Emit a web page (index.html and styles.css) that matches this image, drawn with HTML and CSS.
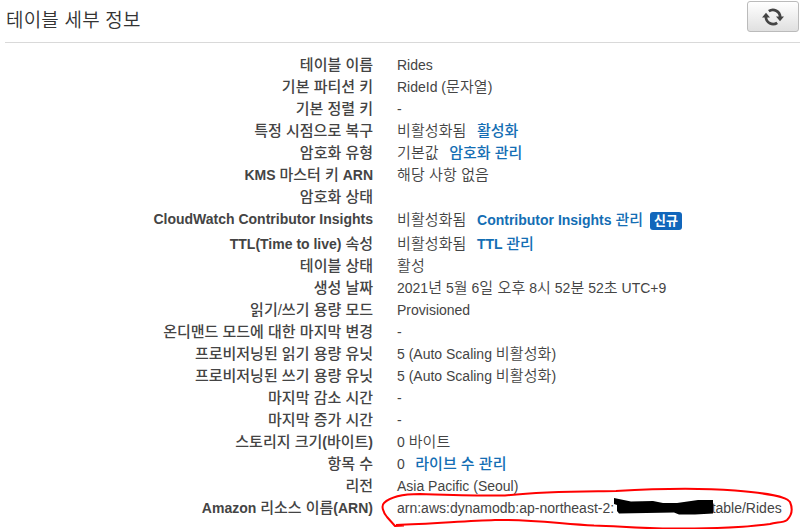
FILE: index.html
```html
<!DOCTYPE html>
<html lang="ko">
<head>
<meta charset="utf-8">
<title>테이블 세부 정보</title>
<link rel="stylesheet" href="styles.css">
</head>
<body>
<header class="header">
  <h1 class="title">테이블 세부 정보</h1>
  <button class="refresh" type="button" aria-label="새로 고침">
    <svg width="22" height="20" viewBox="0 0 22 20">
      <g fill="none" stroke="#444" stroke-width="2.7">
        <path d="M6.800 4.200A7.200 7.200 0 0 1 18.100 10"/>
        <path d="M15.200 15.800A7.200 7.200 0 0 1 3.900 10"/>
      </g>
      <path d="M14 9.500H22L18 14.200Z M0 10.500H8L4 5.800Z" fill="#444"/>
    </svg>
  </button>
</header>
<dl class="details">
  <dt><span class="ko">테이블 이름</span></dt><dd>Rides</dd>
  <dt><span class="ko">기본 파티션 키</span></dt><dd>RideId (<span class="ko">문자열</span>)</dd>
  <dt><span class="ko">기본 정렬 키</span></dt><dd>-</dd>
  <dt><span class="ko">특정 시점으로 복구</span></dt><dd><span class="ko">비활성화됨</span><a class="link"><span class="ko">활성화</span></a></dd>
  <dt><span class="ko">암호화 유형</span></dt><dd><span class="ko">기본값</span><a class="link"><span class="ko">암호화 관리</span></a></dd>
  <dt>KMS <span class="ko">마스터 키</span> ARN</dt><dd><span class="ko">해당 사항 없음</span></dd>
  <dt><span class="ko">암호화 상태</span></dt><dd></dd>
  <dt class="tall">CloudWatch Contributor Insights</dt><dd class="tall"><span class="ko">비활성화됨</span><a class="link">Contributor Insights <span class="ko">관리</span></a><span class="badge">신규</span></dd>
  <dt>TTL(Time to live) <span class="ko">속성</span></dt><dd><span class="ko">비활성화됨</span><a class="link">TTL <span class="ko">관리</span></a></dd>
  <dt><span class="ko">테이블 상태</span></dt><dd><span class="ko">활성</span></dd>
  <dt><span class="ko">생성 날짜</span></dt><dd>2021<span class="ko">년</span> 5<span class="ko">월</span> 6<span class="ko">일 오후</span> 8<span class="ko">시</span> 52<span class="ko">분</span> 52<span class="ko">초</span> UTC+9</dd>
  <dt><span class="ko">읽기/쓰기 용량 모드</span></dt><dd>Provisioned</dd>
  <dt><span class="ko">온디맨드 모드에 대한 마지막 변경</span></dt><dd>-</dd>
  <dt><span class="ko">프로비저닝된 읽기 용량 유닛</span></dt><dd>5 (Auto Scaling <span class="ko">비활성화</span>)</dd>
  <dt><span class="ko">프로비저닝된 쓰기 용량 유닛</span></dt><dd>5 (Auto Scaling <span class="ko">비활성화</span>)</dd>
  <dt><span class="ko">마지막 감소 시간</span></dt><dd>-</dd>
  <dt><span class="ko">마지막 증가 시간</span></dt><dd>-</dd>
  <dt><span class="ko">스토리지 크기</span>(<span class="ko">바이트</span>)</dt><dd>0 <span class="ko">바이트</span></dd>
  <dt><span class="ko">항목 수</span></dt><dd>0<a class="link"><span class="ko">라이브 수 관리</span></a></dd>
  <dt><span class="ko">리전</span></dt><dd>Asia Pacific (Seoul)</dd>
  <dt>Amazon <span class="ko">리소스 이름</span>(ARN)</dt><dd>arn:aws:dynamodb:ap-northeast-2:<span class="redacted"></span>table/Rides</dd>
</dl>
<svg class="markup" width="807" height="529" viewBox="0 0 807 529">
  <path d="M614 498L631 501.500L653 501L663 503H677L698 500H713V513.500L695 514.500H679L674 512.500L619 513.500L617 511V505L614 504Z"/>
  <path class="ring" d="M404 525.500L395 526L387 517C383 512 381 506 384 503C391 496 403 494 420 494C455 495 482 496 505 495.500C545 491 580 491.500 616 491C650 489 690 487 735 490.500C765 493 787 496 790 502C793 509 792 515 787 520C783 523 776 522 770 524C742 528 710 528.500 682 528.500C640 529 620 526 594 525.500C562 524 530 519 495 520C465 521 430 524 396 525"/>
</svg>
</body>
</html>
```

FILE: styles.css
```css
* {
  box-sizing: border-box;
}

body {
  margin: 0;
  width: 807px;
  height: 529px;
  overflow: hidden;
  position: relative;
  background: #fff;
  color: #444;
  font: 14px/22px "Liberation Sans", "Noto Sans CJK KR", sans-serif;
}

.header {
  display: flex;
  justify-content: space-between;
  align-items: flex-start;
  width: 795px;
  height: 43px;
  margin-left: 5px;
  padding: 1px 1px 0;
  border-bottom: 1px solid #d9d9d9;
}

.title {
  margin: 7px 0 0;
  color: #333;
  font-size: 19px;
  font-weight: 350;
  line-height: 26px;
  letter-spacing: 0.2px;
}

.refresh {
  display: flex;
  align-items: center;
  justify-content: center;
  width: 52px;
  height: 31px;
  padding: 1px 0 0;
  border: 1px solid #bbb;
  border-radius: 3px;
  background: linear-gradient(#fff, #e0e0e0);
}

.details {
  display: grid;
  grid-template-columns: 373px 1fr;
  column-gap: 24px;
  margin: 11px 0 0;
}

dt,
dd {
  height: 22px;
  margin: 0;
  white-space: nowrap;
}

dt {
  text-align: right;
  font-weight: 700;
}

.ko {
  font-size: 15px;
  line-height: 20px;
}

dd > .ko {
  font-weight: 350;
  letter-spacing: 0.1px;
}

dt .ko,
.link .ko {
  font-weight: 500;
}

dt.tall,
dd.tall {
  height: 25px;
}

dd.tall {
  padding-top: 1px;
}

.link {
  margin-left: 10.5px;
  color: #146eb4;
  font-weight: 700;
}

.badge {
  display: inline-block;
  height: 18px;
  margin-left: 7px;
  padding: 0 4px;
  border-radius: 3px;
  background: #1166bb;
  color: #fff;
  font-size: 13px;
  font-weight: 700;
  line-height: 17px;
  vertical-align: 0;
}

.redacted {
  display: inline-block;
  width: 97.5px;
}

.markup {
  position: absolute;
  left: 0;
  top: 0;
  pointer-events: none;
}

.ring {
  fill: none;
  stroke: #f00;
  stroke-width: 2;
  stroke-linejoin: round;
}
```
